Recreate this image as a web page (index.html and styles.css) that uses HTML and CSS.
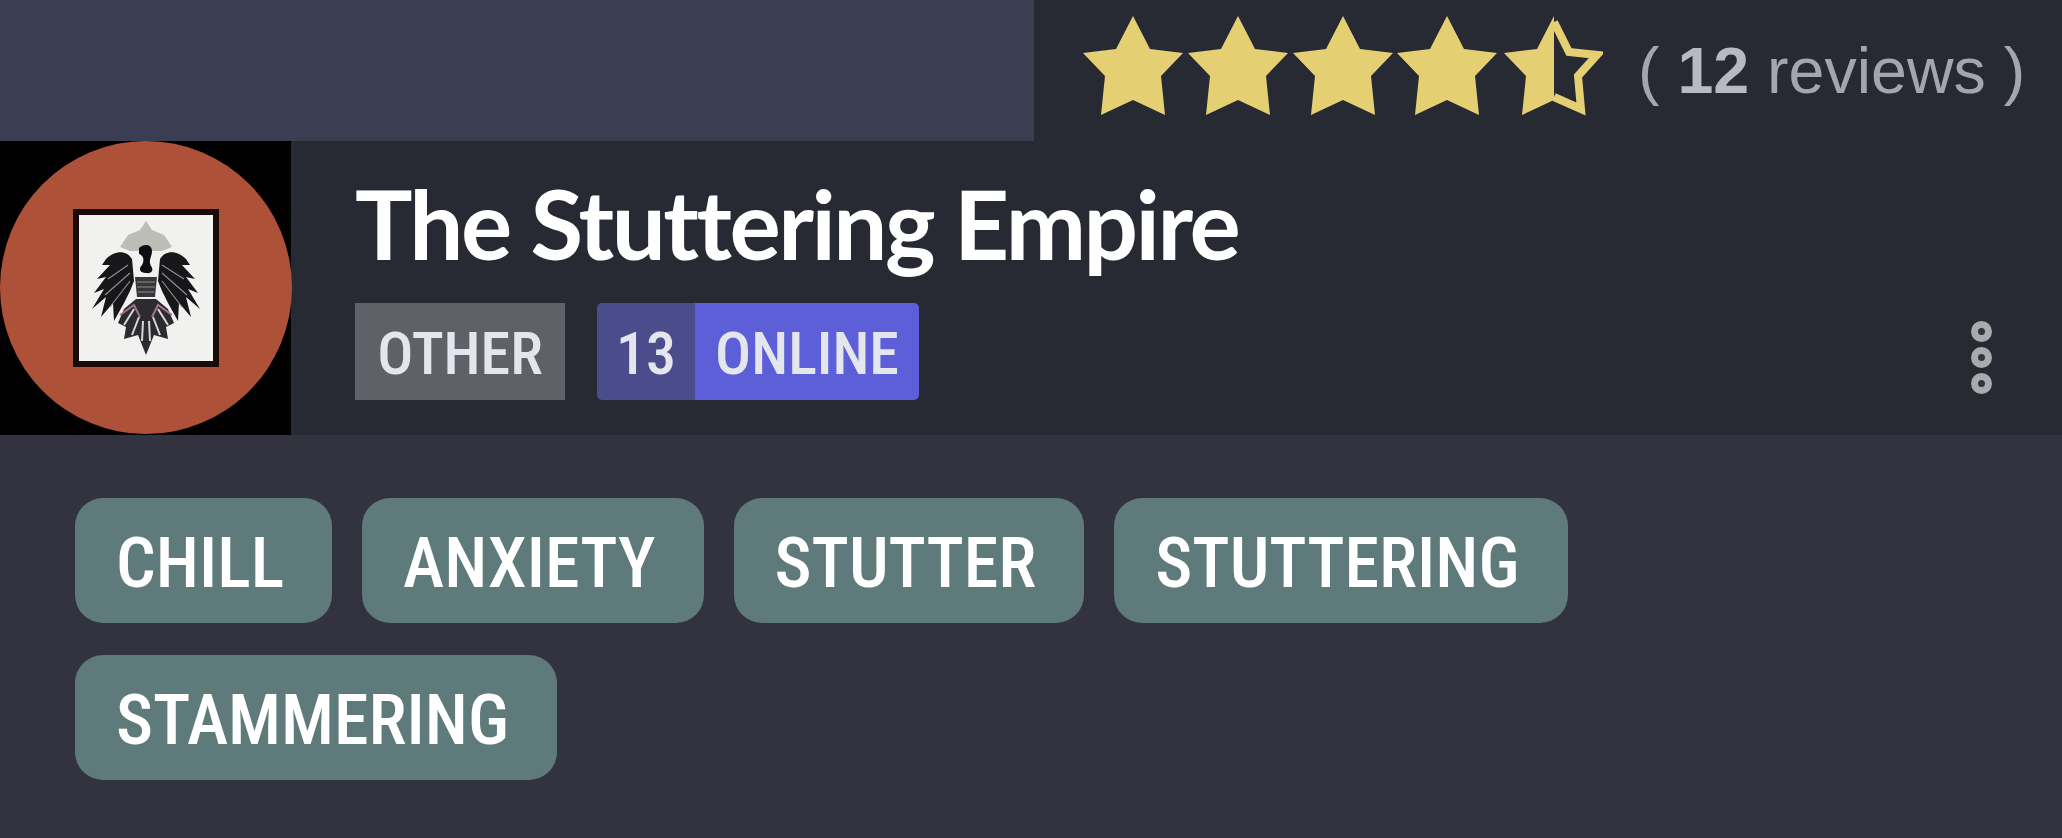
FILE: index.html
```html
<!DOCTYPE html>
<html lang="en">
<head>
<meta charset="utf-8">
<title>The Stuttering Empire</title>
<link rel="stylesheet" href="styles.css">
</head>
<body>
<main class="card">
  <section class="top">
    <div class="top-band"></div>
    <div class="rating">
      <svg class="stars" viewBox="0 0 520 100" aria-hidden="true">
        <defs>
          <path id="star" d="M50 0 L67 33 L100 37 L78 60 L82 99 L50 84 L18 99 L22 60 L0 37 L33 33 Z"/>
        </defs>
        <use href="#star" x="0" class="fill"/>
        <use href="#star" x="105" class="fill"/>
        <use href="#star" x="210" class="fill"/>
        <use href="#star" x="314" class="fill"/>
        <path class="half-fill" d="M471 0 L471 84 L439 99 L443 60 L421 37 L454 33 Z"/>
        <path class="half-line" d="M471 6 L486 36 L514 39 L495 60 L498 93 L471 81"/>
      </svg>
      <p class="reviews">( <b>12</b> reviews )</p>
    </div>
  </section>
  <section class="head">
    <div class="avatar">
      <div class="disc">
        <div class="crest">
          <svg class="eagle" viewBox="0 0 108 134" aria-hidden="true">
            <path class="crown" d="M54 0 L60 9 L72 14 L80 26 L70 30 L38 30 L28 26 L36 14 L48 9 Z"/>
            <path class="wing" d="M40 38 C34 28 22 30 14 38 L10 44 L18 44 L5 58 L14 56 L2 72 L12 68 L0 88 L14 76 L9 96 L21 82 L22 100 L32 82 L38 70 L42 60 Z"/>
            <path class="wing" d="M68 38 C74 28 86 30 94 38 L98 44 L90 44 L103 58 L94 56 L106 72 L96 68 L108 88 L94 76 L99 96 L87 82 L86 100 L76 82 L70 70 L66 60 Z"/>
            <path class="gaps" d="M36 44 L16 58 M38 52 L13 74 M38 60 L18 86 M70 44 L92 58 M70 52 L95 74 M70 60 L90 86"/>
            <path class="bird" d="M47 27 C52 22 60 23 60 30 C60 36 56 39 59 45 C62 49 60 53 54 52 C48 52 46 48 50 44 C53 39 51 34 47 33 Z"/>
            <path class="speck" d="M43 56 L65 56 L63 76 L45 76 Z"/>
            <path class="gaps" d="M45 61 L63 61 M45 66 L63 66 M46 71 L62 71"/>
            <path class="tail" d="M44 78 L64 78 L76 88 L82 102 L74 106 L76 118 L62 114 L54 134 L46 114 L32 118 L34 106 L26 102 L32 88 Z"/>
            <path class="tail-gaps" d="M42 88 L32 104 M66 88 L76 104 M47 96 L40 114 M61 96 L68 114 M51 100 L50 120 M57 100 L58 120"/>
            <path class="blossom" d="M28 94 L42 84 L48 96 M80 94 L66 84 L60 96"/>
          </svg>
        </div>
      </div>
    </div>
    <div class="info">
      <h1 class="name">The Stuttering Empire</h1>
      <div class="badges">
        <span class="badge-other">OTHER</span>
        <span class="badge-online"><span class="count">13</span><span class="status">ONLINE</span></span>
      </div>
    </div>
    <button class="more" aria-label="More options"><i></i><i></i><i></i></button>
  </section>
  <section class="tags">
    <span class="tag">CHILL</span>
    <span class="tag">ANXIETY</span>
    <span class="tag">STUTTER</span>
    <span class="tag">STUTTERING</span>
    <span class="tag">STAMMERING</span>
  </section>
</main>
</body>
</html>
```
FILE: styles.css
```css
* { box-sizing: border-box; }
html, body { margin: 0; height: 100%; }
body { background: #32333f; overflow: hidden; }
.card { width: 2062px; height: 838px; display: flex; flex-direction: column; filter: blur(0.7px); }

.top { height: 141px; display: flex; background: #272933; }
.top-band { width: 1034px; background: #3b3e52; }
.rating { flex: 1; display: flex; align-items: flex-start; padding: 16px 0 0 49px; }
.stars { width: 520px; height: 100px; flex: none; }
.fill, .half-fill { fill: #e5cf73; }
.half-line { fill: none; stroke: #e5cf73; stroke-width: 8; }
.reviews {
  margin: 17px 0 0 35px;
  font: 400 64.5px/1.2 "Liberation Sans", Arial, sans-serif;
  color: #a4a6ae;
  white-space: nowrap;
}
.reviews b { color: #b8bac1; }

.head { height: 294px; display: flex; background: #272933; position: relative; }
.avatar { width: 291px; height: 294px; background: #000; flex: none; }
.disc {
  width: 292px; height: 293px; border-radius: 50%;
  background: #ad5139;
  display: flex; align-items: center; justify-content: center;
}
.crest {
  width: 146px; height: 158px;
  background: #f1f1f0; border: 6px solid #1a0a08;
  display: flex; justify-content: center; align-items: center;
}
.eagle { width: 108px; height: 134px; filter: blur(0.6px); }
.crown { fill: #bdbcb6; }
.bird { fill: #0e0e10; }
.wing { fill: #17171a; }
.gaps { fill: none; stroke: #8d8d90; stroke-width: 1.2; }
.speck { fill: #37373b; }
.tail { fill: #2c2c30; }
.tail-gaps { fill: none; stroke: #d8d8d8; stroke-width: 2; }
.blossom { fill: none; stroke: #a5748a; stroke-width: 2; }

.info { padding: 32px 0 0 64px; flex: 1; }
.name {
  margin: 0;
  font: 700 96px/100px Lato, sans-serif;
  letter-spacing: -2.5px;
  color: #fff;
  white-space: nowrap;
}
.badges { display: flex; gap: 32px; margin-top: 30px; }
.badge-other, .count, .status {
  display: flex; align-items: center; justify-content: center;
  height: 97px; padding-top: 4px;
  font: 500 60px/1 Roboto, sans-serif;
  font-stretch: 75%;
  color: #e4e6ee;
}
.badge-other { width: 210px; background: #5f6068; }
.badge-online { display: flex; border-radius: 5px; overflow: hidden; }
.count { width: 98px; background: #4a4c8c; }
.status { width: 224px; background: #5c5fd8; }

.more {
  position: absolute; left: 1971px; top: 180px;
  display: flex; flex-direction: column; gap: 5px;
  background: none; border: 0; padding: 0;
}
.more i { display: block; width: 21px; height: 21px; border-radius: 50%; border: 7px solid #a9aaae; background: #33343d; }

.tags {
  display: flex; flex-wrap: wrap; gap: 32px 30px;
  padding: 63px 0 0 75px;
}
.tag {
  display: flex; align-items: center; justify-content: center;
  height: 125px; padding: 5px 48px 0 41px;
  border-radius: 28px;
  background: #5f7a7a;
  font: 500 70px/1 Roboto, sans-serif;
  font-stretch: 75%;
  color: #fff;
  white-space: nowrap;
}
```
